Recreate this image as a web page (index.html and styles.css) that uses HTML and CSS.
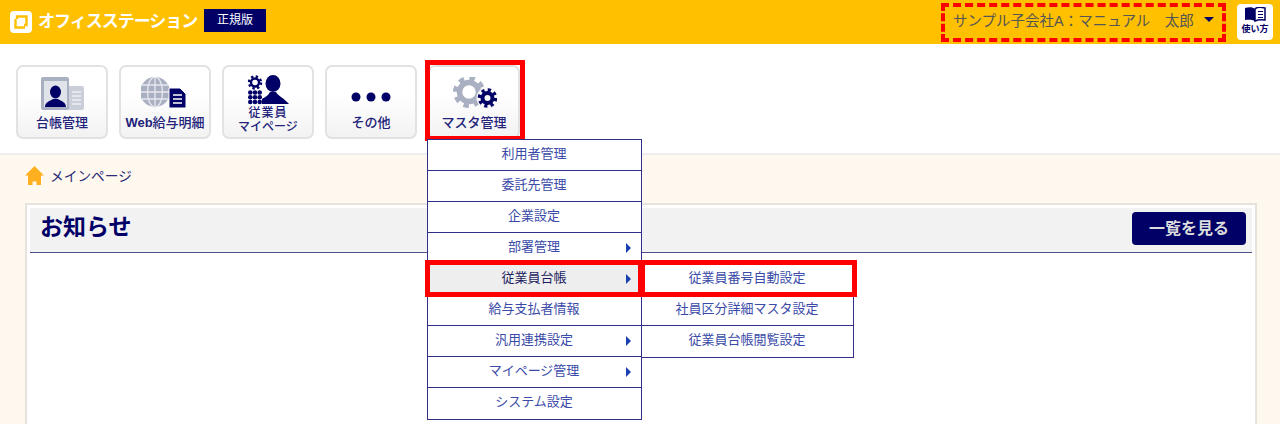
FILE: index.html
```html
<!DOCTYPE html>
<html lang="ja">
<head>
<meta charset="utf-8">
<title>オフィスステーション</title>
<link rel="stylesheet" href="styles.css">
</head>
<body>
<div class="header">
	<svg class="logo" width="22" height="22" viewBox="0 0 22 22">
		<rect width="22" height="22" rx="4" fill="#fff"/>
		<path d="M7 8V5.500h9.500V14H14M15 16.500H5.500V8" fill="none" stroke="#ffc000" stroke-width="2.400"/>
	</svg>
	<span class="brand">オフィスステーション</span>
	<span class="edition">正規版</span>
	<div class="user-box">
		<span class="user-name">サンプル子会社A：マニュアル　太郎</span>
		<span class="caret"></span>
	</div>
	<a class="help">
		<svg width="22" height="15" viewBox="0 0 22 15">
			<path d="M1 1c4-1 8-1 10 1v12c-3-1.500-6-1.500-10-1z" fill="#000066"/>
			<path d="M21 1c-4-1-8-1-10 1v12c3-1.500 6-1.500 10-1z" fill="#fff" stroke="#000066" stroke-width="1.500"/>
			<path d="M14 4.500h5M14 7.500h5M14 10.500h5" stroke="#000066" stroke-width="1.200"/>
		</svg>
		<span>使い方</span>
	</a>
</div>

<div class="nav">
	<a class="tile">
		<svg width="44" height="36" viewBox="0 0 44 36">
			<rect x="27" y="9" width="17" height="24" rx="2" fill="#c9ced9"/>
			<path d="M32 15h9M32 19h9M32 23h9M32 27h9" stroke="#fff" stroke-width="1.200"/>
			<rect x="1" width="28" height="33" rx="2" fill="#a9b0c2"/>
			<rect x="4" y="4" width="23" height="26" fill="#e0e3ea"/>
			<ellipse cx="15.500" cy="15" rx="5.500" ry="6.500" fill="#000066"/>
			<path d="M5 30c0-5 5-6 8-8h5c3 2 8 3 8 8z" fill="#000066"/>
		</svg>
		<span class="tile-label">台帳管理</span>
	</a>
	<a class="tile">
		<svg width="48" height="36" viewBox="0 0 48 36">
			<circle cx="14" cy="15" r="15" fill="#a9b0c2"/>
			<g fill="none" stroke="#e6e8ee" stroke-width="1.300">
				<ellipse cx="14" cy="15" rx="7.500" ry="15"/>
				<path d="M14 0v30M-1 15h30M1 8h26M1 22h26"/>
			</g>
			<path d="M28 11h11l6 6v14H28z" fill="#000066" stroke="#fff" stroke-width="1"/>
			<path d="M32 18h9M32 22h9M32 26h9" stroke="#fff" stroke-width="1.300"/>
		</svg>
		<span class="tile-label"><b>Web</b>給与明細</span>
	</a>
	<a class="tile tile-tall">
		<svg width="42" height="30" viewBox="0 0 42 30">
			<circle cx="8" cy="7.500" r="4" fill="none" stroke="#000066" stroke-width="2.400"/>
			<circle cx="8" cy="7.500" r="6" fill="none" stroke="#000066" stroke-width="2.400" stroke-dasharray="2.350 2.360"/>
			<g fill="#000066">
				<circle cx="3.300" cy="17.500" r="2.300"/><circle cx="8" cy="17.500" r="2.300"/><circle cx="12.700" cy="17.500" r="2.300"/>
				<circle cx="3.300" cy="22.300" r="2.300"/><circle cx="8" cy="22.300" r="2.300"/><circle cx="12.700" cy="22.300" r="2.300"/>
				<circle cx="3.300" cy="27" r="2.300"/><circle cx="8" cy="27" r="2.300"/><circle cx="12.700" cy="27" r="2.300"/>
				<ellipse cx="26" cy="8.500" rx="7.500" ry="8.500"/>
				<path d="M15 29v-5c3-2 6-3 8-7h6c2 4 8 6 13 12z"/>
			</g>
		</svg>
		<span class="tile-label tile-small"><span class="spaced">従業員</span><br>マイページ</span>
	</a>
	<a class="tile">
		<svg width="40" height="36" viewBox="0 0 40 36">
			<g fill="#000066">
				<circle cx="5" cy="20" r="4.500"/><circle cx="20" cy="20" r="4.500"/><circle cx="35" cy="20" r="4.500"/>
			</g>
		</svg>
		<span class="tile-label">その他</span>
	</a>
	<a class="tile tile-marked">
		<svg width="46" height="36" viewBox="0 0 46 36">
			<circle cx="18" cy="15" r="9.500" fill="none" stroke="#a9b0c2" stroke-width="5.500"/>
			<circle cx="18" cy="15" r="13.500" fill="none" stroke="#a9b0c2" stroke-width="5" stroke-dasharray="5.300 5.300"/>
			<circle cx="36.500" cy="21" r="11" fill="#f8f8f8"/>
			<circle cx="36.500" cy="21" r="5" fill="none" stroke="#000066" stroke-width="4"/>
			<circle cx="36.500" cy="21" r="8" fill="none" stroke="#000066" stroke-width="3.500" stroke-dasharray="3.140 3.140"/>
		</svg>
		<span class="tile-label">マスタ管理</span>
	</a>

	<ul class="menu">
		<li>利用者管理</li>
		<li>委託先管理</li>
		<li>企業設定</li>
		<li class="has-sub">部署管理</li>
		<li class="has-sub current marked">従業員台帳
			<ul class="menu submenu">
				<li class="marked">従業員番号自動設定</li>
				<li>社員区分詳細マスタ設定</li>
				<li>従業員台帳閲覧設定</li>
			</ul>
		</li>
		<li>給与支払者情報</li>
		<li class="has-sub">汎用連携設定</li>
		<li class="has-sub">マイページ管理</li>
		<li>システム設定</li>
	</ul>
</div>

<div class="content">
	<div class="breadcrumb">
		<svg width="19" height="19" viewBox="0 0 19 19">
			<path d="M9.500 0l9.500 9.500h-3V19h-4.500v-3.500h-4V19H3V9.500H0z" fill="#ffb020"/>
		</svg>
		<span>メインページ</span>
	</div>
	<div class="panel">
		<div class="panel-head">
			<h2>お知らせ</h2>
			<a class="more">一覧を見る</a>
		</div>
	</div>
</div>
</body>
</html>
```

FILE: styles.css
```css
html, body {
	height: 424px;
	overflow: hidden;
}
body {
	margin: 0;
	font-family: "Liberation Sans", "Noto Sans CJK JP", sans-serif;
	background-color: #fff8ef;
}
ul {
	list-style: none;
	margin: 0;
	padding: 0;
}

/* header */
.header {
	display: flex;
	align-items: center;
	height: 44px;
	padding: 0 7px 0 10px;
	background-color: #ffc000;
}
.logo {
	margin-right: 6px;
}
.brand {
	width: 160px;
	margin-bottom: 5px;
	font-size: 17px;
	font-weight: bold;
	letter-spacing: -1px;
	color: #fff;
	white-space: nowrap;
}
.edition {
	width: 62px;
	height: 23px;
	margin: 0 0 3px 6px;
	background-color: #000066;
	color: #fff;
	font-size: 12px;
	line-height: 23px;
	text-align: center;
}
.user-box {
	display: flex;
	align-items: center;
	box-sizing: border-box;
	width: 285px;
	height: 39px;
	margin-left: auto;
	padding: 0 0 5px 8px;
	border: 4px dashed #ff0000;
}
.user-name {
	font-size: 14.500px;
	color: #555;
	white-space: nowrap;
}
.caret {
	margin-left: 10px;
	border-top: 5px solid #000066;
	border-left: 5px solid transparent;
	border-right: 5px solid transparent;
}
.help {
	display: flex;
	flex-direction: column;
	align-items: center;
	box-sizing: border-box;
	width: 36px;
	height: 36px;
	margin-left: 11px;
	padding-top: 3px;
	border-radius: 4px;
	background-color: #fff;
	color: #000066;
	font-size: 9px;
	font-weight: bold;
	line-height: 14px;
}

/* main nav */
.nav {
	position: relative;
	display: flex;
	gap: 11px;
	box-sizing: border-box;
	height: 111px;
	padding: 21px 0 0 16px;
	background-color: #fff;
	border-bottom: 2px solid #eeeeee;
}
.tile {
	position: relative;
	display: flex;
	flex-direction: column;
	align-items: center;
	justify-content: space-between;
	box-sizing: border-box;
	width: 92px;
	height: 74px;
	padding: 10px 0 7px;
	border: 2px solid #e2e2e2;
	border-radius: 7px;
	background: linear-gradient(#ffffff 40%, #f2f2f2);
}
.tile-tall {
	padding: 8px 0 3px;
}
.tile-label {
	color: #22227a;
	font-size: 13px;
	font-weight: 500;
	line-height: 15px;
	text-align: center;
	white-space: nowrap;
}
.tile-small {
	font-size: 12px;
	line-height: 14px;
}
.spaced {
	letter-spacing: 1px;
}
.tile-marked::after {
	content: "";
	position: absolute;
	top: -7px;
	left: -5px;
	right: -7px;
	bottom: -4px;
	border: 5px solid #ff0000;
}

/* dropdown */
.menu {
	position: absolute;
	top: 95px;
	left: 427px;
	width: 215px;
	box-sizing: border-box;
	border: 1px solid #30308a;
	background-color: #fff;
	color: #3a4aa8;
	font-size: 13px;
	z-index: 5;
}
.menu li {
	position: relative;
	height: 31px;
	box-sizing: border-box;
	padding-right: 1px;
	border-bottom: 1px solid #30308a;
	line-height: 28px;
	text-align: center;
}
.menu li:last-child {
	border-bottom: 0;
}
.has-sub::before {
	content: "";
	position: absolute;
	top: 10px;
	right: 10px;
	border-left: 5px solid #1a3fb0;
	border-top: 5px solid transparent;
	border-bottom: 5px solid transparent;
}
.current {
	background-color: #eeeeee;
	color: #1c1c60;
}
.marked::after {
	content: "";
	position: absolute;
	top: -4px;
	left: -3px;
	right: -2px;
	bottom: -3px;
	border: 5px solid #ff0000;
	z-index: 2;
}
.submenu {
	top: -1px;
	left: 100%;
	width: 213px;
	color: #3a4aa8;
	text-align: center;
}
.submenu li.marked::after {
	left: -2px;
	right: -4px;
}

/* content */
.content {
	padding: 6px 23px 0 25px;
}
.breadcrumb {
	display: flex;
	align-items: center;
	gap: 6px;
	height: 28px;
	color: #2a2a78;
	font-size: 13.700px;
}
.panel {
	box-sizing: border-box;
	height: 221px;
	margin-top: 14px;
	padding: 3px;
	border: 2px solid #e6e3de;
	border-bottom: 0;
	background-color: #fff;
}
.panel-head {
	display: flex;
	align-items: center;
	justify-content: space-between;
	box-sizing: border-box;
	height: 45px;
	padding: 0 6px 4px 10px;
	background-color: #f2f2f2;
	border-bottom: 1px solid #50508f;
}
.panel-head h2 {
	margin: 0 0 6px;
	color: #000066;
	font-size: 23px;
	font-weight: bold;
}
.more {
	width: 114px;
	height: 33px;
	border-radius: 4px;
	background-color: #000066;
	color: #dddddd;
	font-size: 16px;
	font-weight: bold;
	line-height: 33px;
	text-align: center;
}
```
